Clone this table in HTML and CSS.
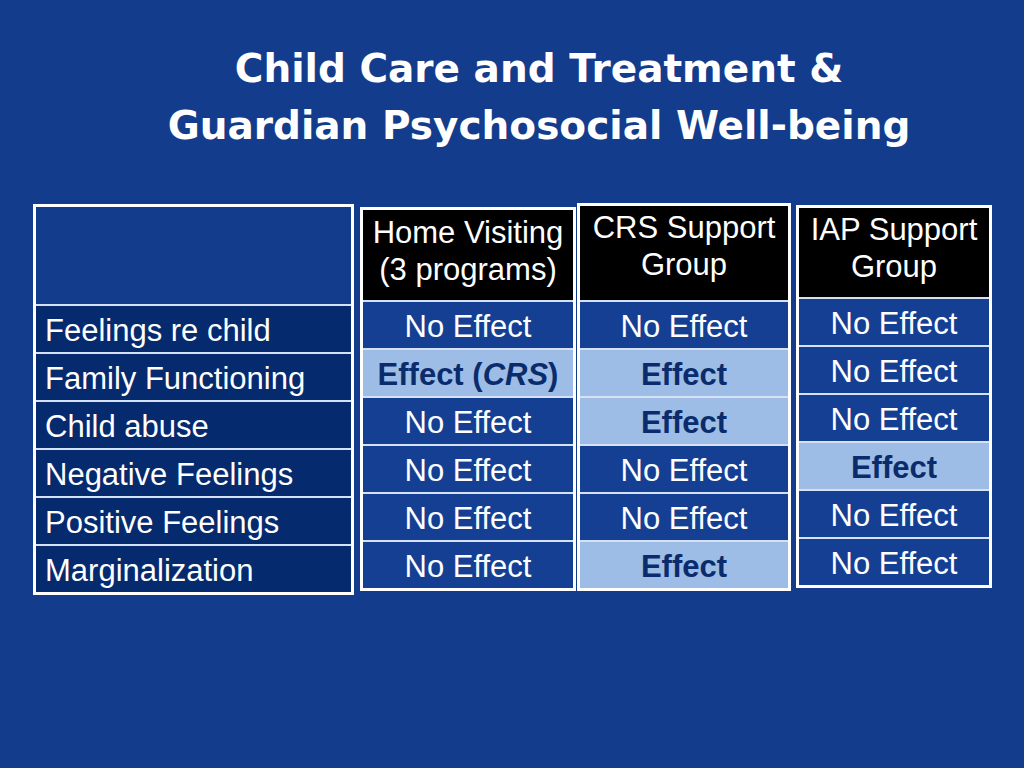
FILE: index.html
```html
<!DOCTYPE html>
<html>
<head>
<meta charset="utf-8">
<link rel="stylesheet" href="styles.css">
</head>
<body>
<div class="slide">
  <h1 class="title">Child Care and Treatment &amp;<br>Guardian Psychosocial Well-being</h1>
  <div class="tables">
    <div class="tbl labels">
      <div class="head"></div>
      <div class="cell">Feelings re child</div>
      <div class="cell">Family Functioning</div>
      <div class="cell">Child abuse</div>
      <div class="cell">Negative Feelings</div>
      <div class="cell">Positive Feelings</div>
      <div class="cell">Marginalization</div>
    </div>
    <div class="tbl home">
      <div class="head">Home Visiting<br>(3 programs)</div>
      <div class="cell">No Effect</div>
      <div class="cell hit">Effect (<i>CRS</i>)</div>
      <div class="cell">No Effect</div>
      <div class="cell">No Effect</div>
      <div class="cell">No Effect</div>
      <div class="cell">No Effect</div>
    </div>
    <div class="tbl crs">
      <div class="head">CRS Support<br>Group</div>
      <div class="cell">No Effect</div>
      <div class="cell hit">Effect</div>
      <div class="cell hit">Effect</div>
      <div class="cell">No Effect</div>
      <div class="cell">No Effect</div>
      <div class="cell hit">Effect</div>
    </div>
    <div class="tbl iap">
      <div class="head">IAP Support<br>Group</div>
      <div class="cell">No Effect</div>
      <div class="cell">No Effect</div>
      <div class="cell">No Effect</div>
      <div class="cell hit">Effect</div>
      <div class="cell">No Effect</div>
      <div class="cell">No Effect</div>
    </div>
  </div>
</div>
</body>
</html>
```
FILE: styles.css
```css
html, body {
  margin: 0;
  padding: 0;
}
body {
  background: #143c8c;
  width: 1024px;
  height: 768px;
  overflow: hidden;
}
.slide {
  width: 1024px;
  height: 768px;
  background: #143c8c;
}
.title {
  margin: 0;
  padding-top: 40px;
  padding-left: 54px;
  text-align: center;
  color: #ffffff;
  font-family: "Comic Sans MS", "DejaVu Sans", sans-serif;
  font-weight: bold;
  font-size: 39px;
  line-height: 57px;
}
.tables {
  display: flex;
  align-items: flex-start;
  padding-left: 33px;
  margin-top: 50px;
  font-family: "Liberation Sans", Arial, sans-serif;
  font-size: 31px;
  color: #ffffff;
}
.tbl {
  border: 3px solid #ffffff;
  display: flex;
  flex-direction: column;
  box-sizing: border-box;
}
.head {
  background: #000000;
  text-align: center;
  line-height: 37px;
  padding-top: 3px;
  box-sizing: border-box;
}
.cell {
  height: 48px;
  box-sizing: border-box;
  border-top: 2px solid #d6e2f4;
  display: flex;
  align-items: center;
  justify-content: center;
  padding-top: 3px;
  background: #143f93;
  white-space: nowrap;
}
.cell.hit {
  background: #9dbde6;
  color: #0b2c6c;
  font-weight: bold;
}
.labels {
  width: 321px;
}
.labels .head {
  background: #143c8c;
  height: 97px;
}
.labels .cell {
  background: #062a6e;
  justify-content: flex-start;
  padding-left: 9px;
}
.home {
  width: 216px;
  margin-left: 6px;
  margin-top: 3px;
}
.home .head { height: 90px; padding-top: 4px; }
.crs {
  width: 214px;
  margin-left: 1px;
  margin-top: -1px;
}
.crs .head { height: 94px; padding-top: 3px; }
.iap {
  width: 196px;
  margin-left: 5px;
  margin-top: 1px;
}
.iap .head { height: 89px; padding-top: 3px; }
.iap .cell:first-of-type { padding-top: 0; }
```
